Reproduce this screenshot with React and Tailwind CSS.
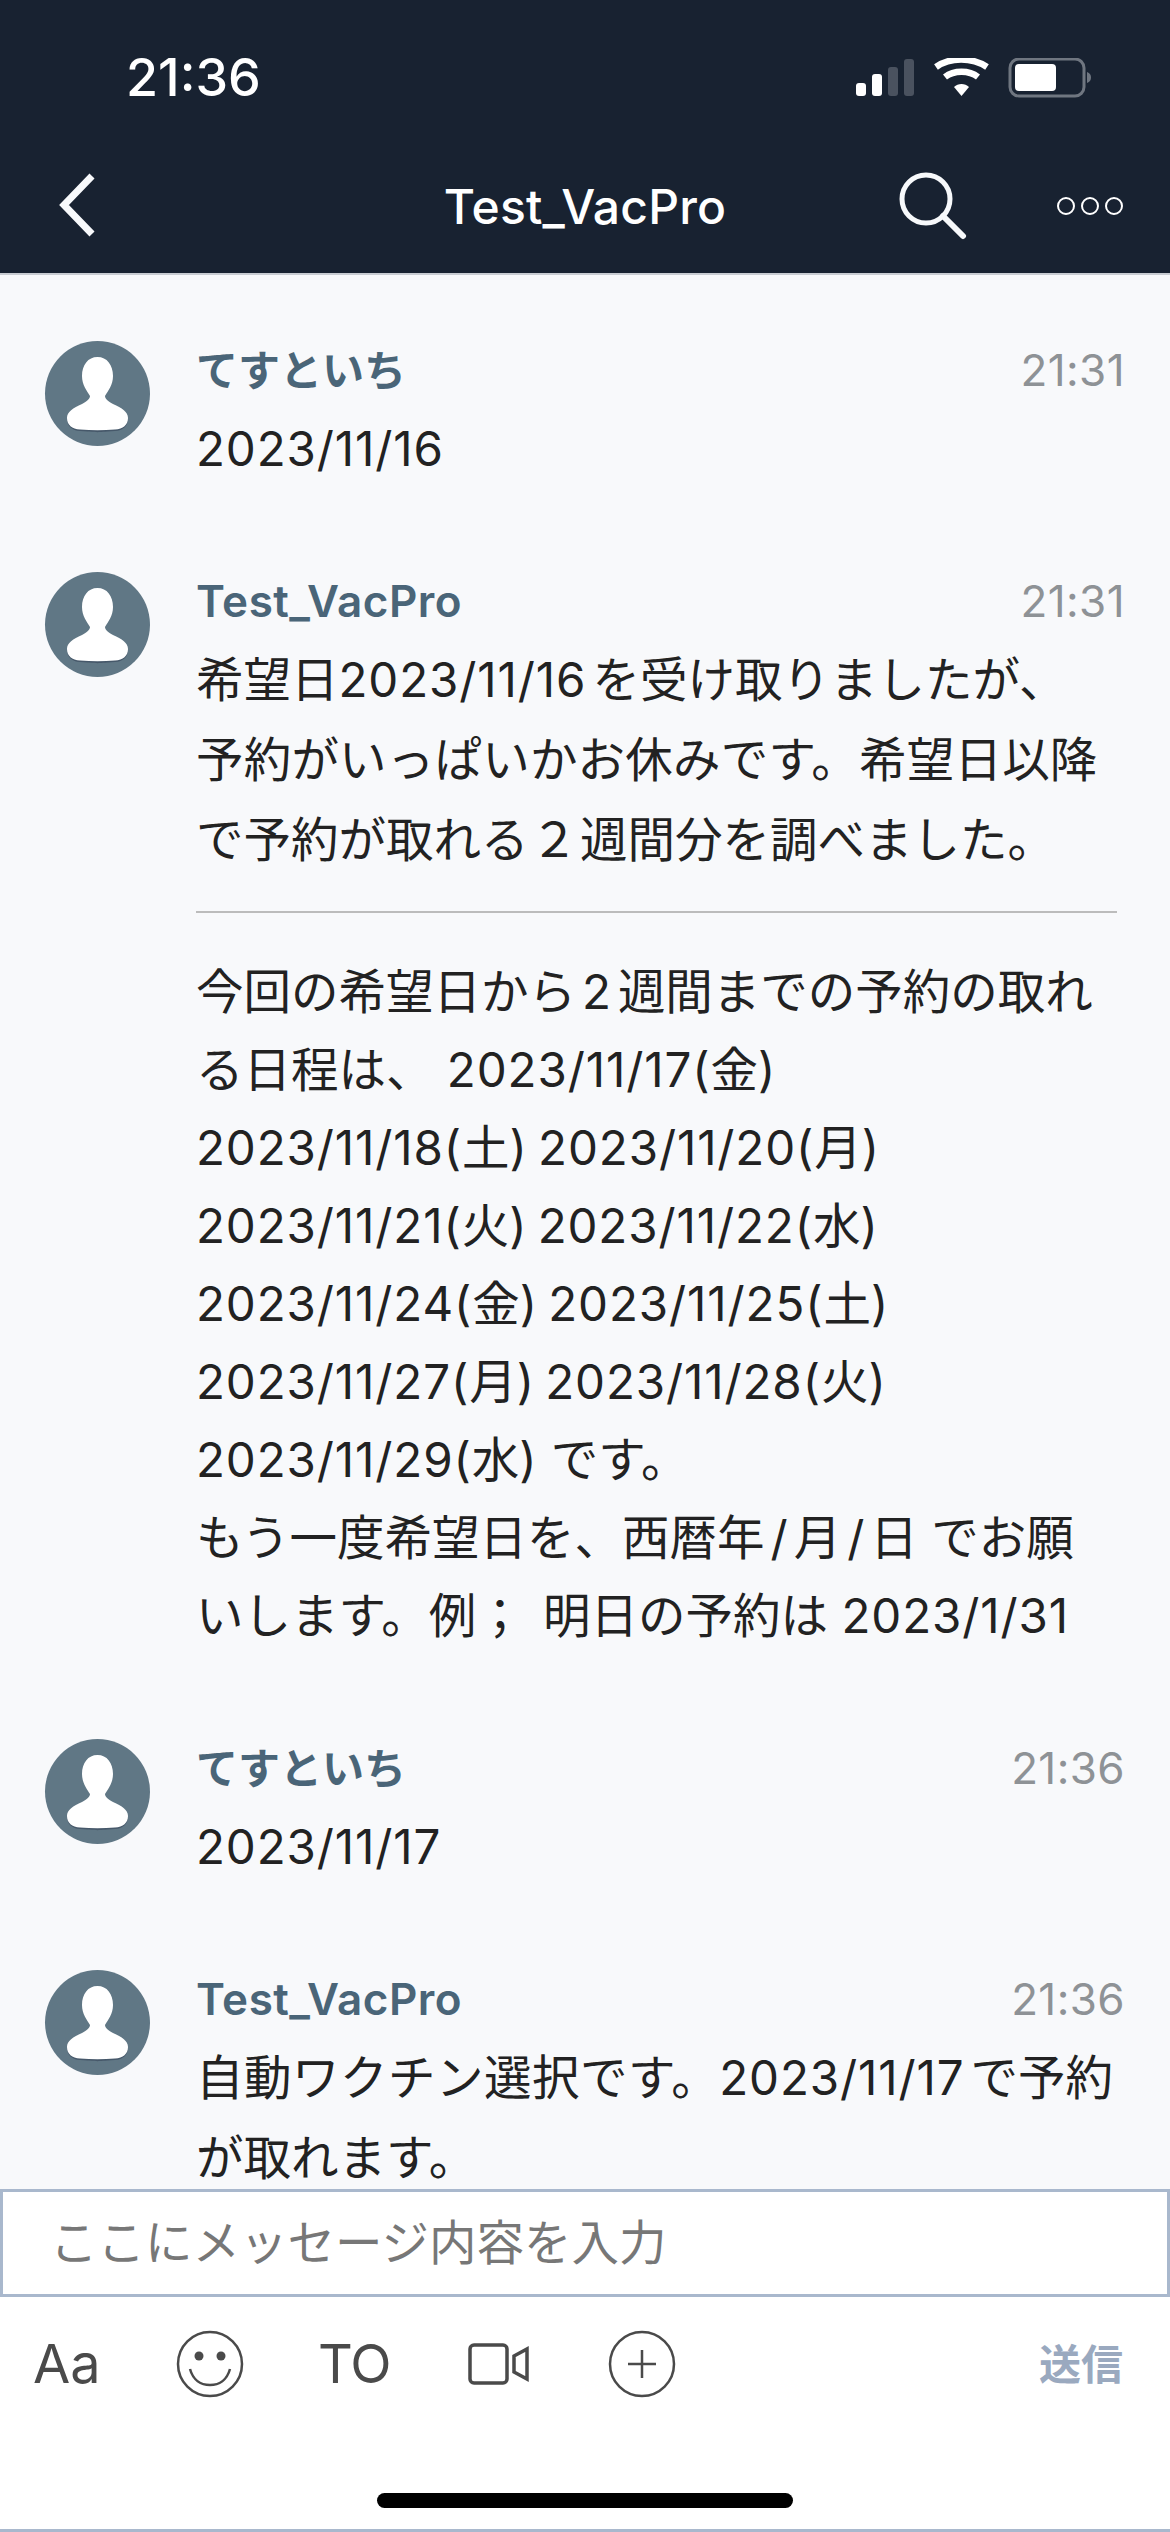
import React from 'react';

const FONT = 'font-["Inter","Noto_Sans_CJK_JP",sans-serif]';

const Avatar = () => (
  <div className="w-[105px] h-[105px] shrink-0 rounded-full bg-[#607785] flex items-center justify-center">
    <svg width="105" height="105" viewBox="0 0 105 105">
      <path
        d="M35 90C58 91.500 47 91.500 70 90 78 89.500 83 85 83 78H22c0 7 5 11.500 13 12z"
        fill="#46586a"
      />
      <path
        d="M52.500 16C62 16 68 24 68 35 68 44 63 50 60 55 60 58 63 60 68 63 77 67 83 71 83 77 83 84 78 88 70 88.500 58 89.500 47 89.500 35 88.500 27 88 22 84 22 77 22 71 28 67 37 63 42 60 45 58 45 55 42 50 37 44 37 35 37 24 43 16 52.500 16z"
        fill="#ffffff"
      />
    </svg>
  </div>
);

const Message = ({ name, nameClass, time, children }) => (
  <div className="flex pl-[45px] pr-[45px] mb-[84px] last:mb-0">
    <Avatar />
    <div className="ml-[46px] flex-1 min-w-0">
      <div className="h-[58px] flex items-center justify-between">
        <span className={`font-semibold text-[#4a6578] ${nameClass}`}>{name}</span>
        <span className="text-[44px] text-[#8e9296] tracking-[0.4px]">{time}</span>
      </div>
      <div className="mt-[11px] text-[47.5px] text-[#222222]">{children}</div>
    </div>
  </div>
);

const Line = ({ children, tall }) => (
  <div className={tall ? 'h-[80px] leading-[78px] whitespace-nowrap' : 'h-[78px] leading-[78px] whitespace-nowrap'}>
    {children}
  </div>
);

// two dates on one line sit closer together than a plain space
const DateLine = ({ children }) => (
  <div className="h-[78px] leading-[78px] whitespace-nowrap [word-spacing:-4px]">{children}</div>
);

// latin / digit runs sit a bit wider than Inter's default
const N = ({ children, className = '' }) => <span className={`tracking-[0.9px] ${className}`}>{children}</span>;

const JA_NAME = 'text-[42px]';
const EN_NAME = 'text-[44px] tracking-[0.5px]';

export default function App() {
  return (
    <div className={`${FONT} w-[1170px] h-[2532px] flex flex-col bg-white overflow-hidden`}>
      <header className="h-[273px] shrink-0 bg-[#182231] text-white">
        <div className="h-[150px] pt-[48px] pl-[126px] pr-[79px] flex justify-between items-start">
          <span className="text-[52px] leading-[60px] font-medium">21:36</span>
          <svg width="235" height="40" viewBox="0 0 235 40" className="mt-[10px]">
            <rect x="0" y="25" width="10" height="13" rx="3" fill="#fff" />
            <rect x="16" y="16" width="10" height="22" rx="3" fill="#fff" />
            <rect x="32" y="9" width="10" height="29" rx="3" fill="#4a525f" />
            <rect x="48" y="1" width="10" height="37" rx="3" fill="#4a525f" />
            <path d="M80 9C94-1 116-1 131 9" fill="none" stroke="#fff" strokeWidth="6.5" />
            <path d="M89 19C98 12 113 12 122 19" fill="none" stroke="#fff" strokeWidth="6.5" />
            <path d="M98 29c4-4 11-4 15 0l-7.500 9z" fill="#fff" />
            <rect x="154" y="1" width="74" height="37" rx="9" fill="none" stroke="#6f7680" strokeWidth="3" />
            <rect x="159" y="6" width="41" height="27" rx="4" fill="#fff" />
            <path d="M231 14c3 1 4 3 4 5.500s-1 4.500-4 5.500z" fill="#6f7680" />
          </svg>
        </div>
        <div className="h-[123px] grid grid-cols-[1fr_auto_1fr] items-center px-[46px]">
          <svg width="37" height="64" viewBox="0 0 37 64" className="ml-[12px] -mt-[13px]">
            <path d="M34 3L6 32l28 29" fill="none" stroke="#f7f9fb" strokeWidth="7" />
          </svg>
          <span className="text-[48px] font-medium -mt-[10px] tracking-[0.2px]">Test_VacPro</span>
          <div className="flex justify-end items-center -mt-[12px]">
            <svg width="68" height="68" viewBox="0 0 68 68" className="mr-[89px]">
              <circle cx="27" cy="27" r="24" fill="none" stroke="#f7f9fb" strokeWidth="5" />
              <path d="M44 44l20 20" stroke="#f7f9fb" strokeWidth="6" strokeLinecap="round" />
            </svg>
            <svg width="68" height="20" viewBox="0 0 68 20">
              <circle cx="10" cy="10" r="8" fill="none" stroke="#fff" strokeWidth="2" />
              <circle cx="34" cy="10" r="8" fill="none" stroke="#fff" strokeWidth="2" />
              <circle cx="58" cy="10" r="8" fill="none" stroke="#fff" strokeWidth="2" />
            </svg>
          </div>
        </div>
      </header>

      <main className="flex-1 min-h-0 overflow-hidden bg-[#f8f9fb] border-t-2 border-[#c8ccd2] pt-[66px]">
        <Message name="てすといち" nameClass={JA_NAME} time="21:31">
          <Line><N>2023/11/16</N></Line>
        </Message>
        <Message name="Test_VacPro" nameClass={EN_NAME} time="21:31">
          <Line tall>希望日<N className="mr-[6px]">2023/11/16</N>を受け取りましたが、</Line>
          <Line tall><span className="tracking-[0.2px]">予約がいっぱいかお休みです。希望日以降</span></Line>
          <Line tall>で予約が取れる<span className="mx-[2px]">２</span>週間分を調べました。</Line>
          <div className="mt-[30px] mb-[40px] border-t-2 border-[#bcbcbc] w-[921px]" />
          <Line>今回の希望日から<N className="mx-[6px]">2</N>週間までの予約の取れ</Line>
          <Line>る日程は、 <N>2023/11/17(</N>金<N>)</N></Line>
          <DateLine><N>2023/11/18(</N>土<N>) 2023/11/20(</N>月<N>)</N></DateLine>
          <DateLine><N>2023/11/21(</N>火<N>) 2023/11/22(</N>水<N>)</N></DateLine>
          <DateLine><N>2023/11/24(</N>金<N>) 2023/11/25(</N>土<N>)</N></DateLine>
          <DateLine><N>2023/11/27(</N>月<N>) 2023/11/28(</N>火<N>)</N></DateLine>
          <Line><N>2023/11/29(</N>水<N>)</N> です。</Line>
          <Line>もう一度希望日を、西暦年<span className="mx-[6px]">/</span>月<span className="mx-[6px]">/</span>日 でお願</Line>
          <Line>いします。例； <span className="ml-[6px]">明日の予約は</span> <N>2023/1/31</N></Line>
        </Message>
        <Message name="てすといち" nameClass={JA_NAME} time="21:36">
          <Line><N>2023/11/17</N></Line>
        </Message>
        <Message name="Test_VacPro" nameClass={EN_NAME} time="21:36">
          <Line tall><span className="tracking-[0.5px]">自動ワクチン選択です。</span><N className="mr-[6px]">2023/11/17</N>で予約</Line>
          <Line>が取れます。</Line>
        </Message>
      </main>

      <footer className="h-[343px] shrink-0 bg-white border-b-[3px] border-[#a9b8cd] flex flex-col">
        <div className="h-[108px] border-[3px] border-[#a9b8cd] flex items-center pl-[47px] text-[47.5px] text-[#777777]">
          ここにメッセージ内容を入力
        </div>
        <div className="h-[134px] flex items-center pl-[33px] pr-[47px] text-[#4a4a4a]">
          <span className="w-[66px] text-[54px] leading-none">Aa</span>
          <svg width="68" height="68" viewBox="0 0 68 68" className="ml-[77px]">
            <circle cx="34" cy="34" r="32" fill="none" stroke="#4a4a4a" strokeWidth="2.5" />
            <circle cx="23" cy="26" r="4.5" fill="#4a4a4a" />
            <circle cx="45" cy="26" r="4.5" fill="#4a4a4a" />
            <path d="M14 39c3 11 11 16 20 16s17-5 20-16" fill="none" stroke="#4a4a4a" strokeWidth="2.5" />
          </svg>
          <span className="ml-[74px] w-[68px] text-[54px] leading-none tracking-[-1px]">TO</span>
          <svg width="62" height="42" viewBox="0 0 62 42" className="ml-[82px]">
            <rect x="2" y="2" width="37" height="38" rx="4" fill="none" stroke="#4a4a4a" strokeWidth="3.5" />
            <path d="M59 6v30l-13-7V13z" fill="none" stroke="#4a4a4a" strokeWidth="3.5" />
          </svg>
          <svg width="68" height="68" viewBox="0 0 68 68" className="ml-[78px]">
            <circle cx="34" cy="34" r="32" fill="none" stroke="#4a4a4a" strokeWidth="2.5" />
            <path d="M34 20v28M20 34h28" stroke="#4a4a4a" strokeWidth="2.5" />
          </svg>
          <span className="ml-auto text-[42px] font-bold text-[#9aa9bf]">送信</span>
        </div>
        <div className="flex-1 flex justify-center pt-[62px]">
          <div className="w-[416px] h-[15px] rounded-full bg-black" />
        </div>
      </footer>
    </div>
  );
}
